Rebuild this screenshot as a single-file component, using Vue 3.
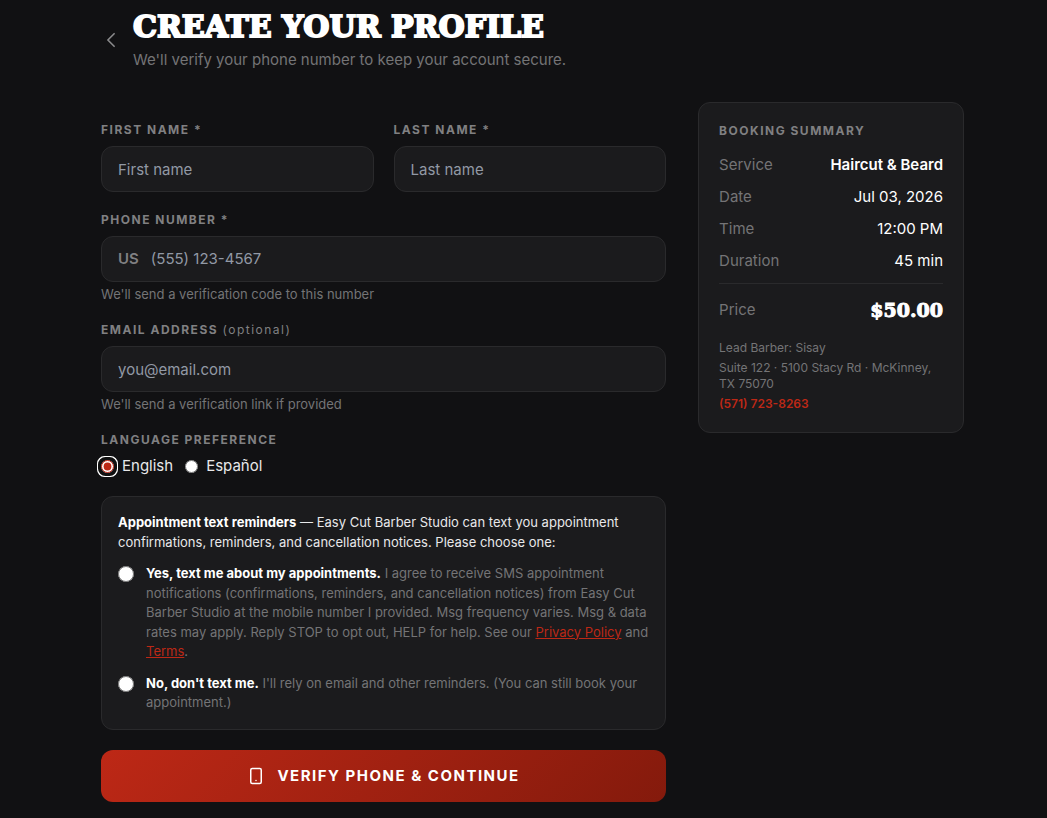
<script setup>
import { onMounted, ref } from 'vue'

const language = ref('en')
const reminders = ref('')
const englishRadio = ref(null)

const summary = [
  { label: 'Service', value: 'Haircut & Beard', strong: true },
  { label: 'Date', value: 'Jul 03, 2026' },
  { label: 'Time', value: '12:00 PM' },
  { label: 'Duration', value: '45 min' },
]

onMounted(() => englishRadio.value.focus())
</script>

<template>
  <main class="page">
    <header class="header">
      <button class="back" type="button" aria-label="Back">
        <svg viewBox="0 0 24 24" fill="none" stroke="currentColor" stroke-width="2" stroke-linecap="round" stroke-linejoin="round">
          <path d="M15.75 19.5 8.25 12l7.5-7.5" />
        </svg>
      </button>
      <div>
        <h1 class="title">CREATE YOUR PROFILE</h1>
        <p class="subtitle">We'll verify your phone number to keep your account secure.</p>
      </div>
    </header>

    <div class="columns">
      <form class="form" @submit.prevent>
        <div class="names">
          <div class="field">
            <label class="label" for="first">FIRST NAME *</label>
            <input id="first" class="input" type="text" placeholder="First name" />
          </div>
          <div class="field">
            <label class="label" for="last">LAST NAME *</label>
            <input id="last" class="input" type="text" placeholder="Last name" />
          </div>
        </div>

        <div class="field">
          <label class="label" for="phone">PHONE NUMBER *</label>
          <div class="input phone">
            <span class="country">US</span>
            <input id="phone" class="bare" type="tel" placeholder="(555) 123-4567" />
          </div>
          <p class="hint">We'll send a verification code to this number</p>
        </div>

        <div class="field">
          <label class="label" for="email">EMAIL ADDRESS <span class="optional">(optional)</span></label>
          <input id="email" class="input" type="email" placeholder="you@email.com" />
          <p class="hint">We'll send a verification link if provided</p>
        </div>

        <div class="field" role="radiogroup" aria-labelledby="language-label">
          <span id="language-label" class="label">LANGUAGE PREFERENCE</span>
          <div class="languages">
            <label class="language">
              <input ref="englishRadio" v-model="language" class="radio" type="radio" name="language" value="en" />
              English
            </label>
            <label class="language">
              <input v-model="language" class="radio" type="radio" name="language" value="es" />
              Español
            </label>
          </div>
        </div>

        <div class="consent">
          <p class="intro">
            <strong>Appointment text reminders</strong> — Easy Cut Barber Studio can text you appointment
            confirmations, reminders, and cancellation notices. Please choose one:
          </p>
          <div class="option">
            <input id="sms-yes" v-model="reminders" class="radio large" type="radio" name="reminders" value="yes" />
            <label for="sms-yes">
              <strong>Yes, text me about my appointments.</strong> I agree to receive SMS appointment
              notifications (confirmations, reminders, and cancellation notices) from Easy Cut Barber
              Studio at the mobile number I provided. Msg frequency varies. Msg &amp; data rates may apply.
              Reply STOP to opt out, HELP for help. See our <a href="#privacy">Privacy Policy</a> and
              <a href="#terms">Terms</a>.
            </label>
          </div>
          <div class="option">
            <input id="sms-no" v-model="reminders" class="radio large" type="radio" name="reminders" value="no" />
            <label for="sms-no">
              <strong>No, don't text me.</strong> I'll rely on email and other reminders. (You can still
              book your appointment.)
            </label>
          </div>
        </div>

        <button class="submit" type="submit">
          <svg viewBox="0 0 24 24" fill="none" stroke="currentColor" stroke-width="2" stroke-linecap="round" stroke-linejoin="round">
            <rect x="5" y="2" width="14" height="20" rx="2" />
            <path d="M12 18h.01" />
          </svg>
          VERIFY PHONE &amp; CONTINUE
        </button>
      </form>

      <aside class="summary">
        <h2 class="label">BOOKING SUMMARY</h2>
        <dl class="rows">
          <div v-for="row in summary" :key="row.label" class="row">
            <dt>{{ row.label }}</dt>
            <dd :class="{ strong: row.strong }">{{ row.value }}</dd>
          </div>
          <div class="row total">
            <dt>Price</dt>
            <dd class="price">$50.00</dd>
          </div>
        </dl>
        <div class="contact">
          <p>Lead Barber: Sisay</p>
          <p>Suite 122 · 5100 Stacy Rd · McKinney, TX&nbsp;75070</p>
          <a href="tel:+15717238263">(571) 723-8263</a>
        </div>
      </aside>
    </div>
  </main>
</template>

<style>
body {
  background: #111113;
}
</style>

<style scoped>
* {
  box-sizing: border-box;
}

h1,
h2,
p,
dl,
dd {
  margin: 0;
}

.page {
  padding: 9px 83px 16px 101px;
  background: #111113;
  color: #fff;
  font: 400 15px/20px Inter, "Liberation Sans", sans-serif;
}

.header {
  display: flex;
  align-items: center;
  gap: 12px;
  margin-bottom: 32px;
}

.back {
  display: flex;
  padding: 0;
  border: 0;
  background: none;
  color: #8a8a8c;
}

.back svg {
  width: 20px;
  height: 20px;
}

.title {
  font: 700 30px/36px "DejaVu Serif", serif;
  -webkit-text-stroke: 2px currentColor;
}

.subtitle {
  margin-top: 5px;
  color: #747476;
}

.columns {
  display: grid;
  grid-template-columns: minmax(0, 17fr) minmax(0, 8fr);
  align-items: start;
  gap: 32px;
}

.form {
  display: flex;
  flex-direction: column;
  gap: 20px;
  padding-top: 20px;
}

.names {
  display: grid;
  grid-template-columns: 1fr 1fr;
  gap: 20px;
}

.field {
  display: flex;
  flex-direction: column;
}

.label {
  margin-bottom: 8px;
  color: #808082;
  font-size: 12px;
  font-weight: 700;
  line-height: 16px;
  letter-spacing: 1.5px;
}

.optional {
  font-weight: 400;
}

.input {
  width: 100%;
  height: 46px;
  padding: 0 16px;
  border: 1px solid #2a2a2c;
  border-radius: 12px;
  background: #1b1b1d;
  color: #fff;
  font: inherit;
}

.input::placeholder,
.bare::placeholder {
  color: #9299a5;
  opacity: 1;
}

.phone {
  display: flex;
  align-items: center;
  gap: 12px;
}

.country {
  color: #808082;
  font-weight: 600;
}

.bare {
  flex: 1;
  min-width: 0;
  padding: 0;
  border: 0;
  outline: 0;
  background: none;
  color: #fff;
  font: inherit;
}

.hint {
  margin-top: 4px;
  color: #747476;
  font-size: 13px;
  line-height: 16px;
}

.languages {
  display: flex;
  gap: 12px;
}

.language {
  display: flex;
  align-items: center;
  gap: 8px;
  color: #e8e8ea;
}

.radio {
  flex: none;
  width: 13px;
  height: 13px;
  margin: 0;
  accent-color: #bd2816;
}

.radio:focus {
  outline: 1px auto -webkit-focus-ring-color;
  outline-offset: 2px;
}

.large {
  width: 16px;
  height: 16px;
  margin-top: 2px;
}

.consent {
  display: flex;
  flex-direction: column;
  gap: 12px;
  padding: 16px;
  border: 1px solid #2a2a2c;
  border-radius: 12px;
  background: #1b1b1d;
  font-size: 13px;
  line-height: 1.5;
}

.intro {
  color: #e8e8ea;
}

.consent strong {
  color: #fff;
  font-weight: 700;
}

.option {
  display: flex;
  align-items: flex-start;
  gap: 12px;
  color: #747476;
}

.option a {
  color: #bd2816;
  text-decoration: underline;
}

.submit {
  display: flex;
  align-items: center;
  justify-content: center;
  gap: 12px;
  height: 52px;
  border: 0;
  border-radius: 12px;
  background: linear-gradient(135deg, #bd2816, #841a0c);
  color: #fff;
  font: 700 15px/20px Inter, "Liberation Sans", sans-serif;
  letter-spacing: 1.5px;
}

.submit svg {
  width: 18px;
  height: 18px;
}

.summary {
  padding: 20px;
  border: 1px solid #2a2a2c;
  border-radius: 12px;
  background: #1b1b1d;
}

.summary .label {
  margin-bottom: 16px;
}

.rows {
  display: flex;
  flex-direction: column;
  gap: 12px;
}

.row {
  display: flex;
  align-items: center;
  justify-content: space-between;
}

.row dt {
  color: #747476;
}

.strong {
  font-weight: 600;
}

.total {
  padding-top: 12px;
  border-top: 1px solid #2a2a2c;
}

.price {
  font: 700 19px/28px "DejaVu Serif", serif;
  -webkit-text-stroke: 1px currentColor;
}

.contact {
  display: flex;
  flex-direction: column;
  gap: 4px;
  margin-top: 16px;
  color: #747476;
  font-size: 12px;
  line-height: 16px;
}

.contact a {
  color: #bd2816;
  font-weight: 600;
  text-decoration: none;
}
</style>
